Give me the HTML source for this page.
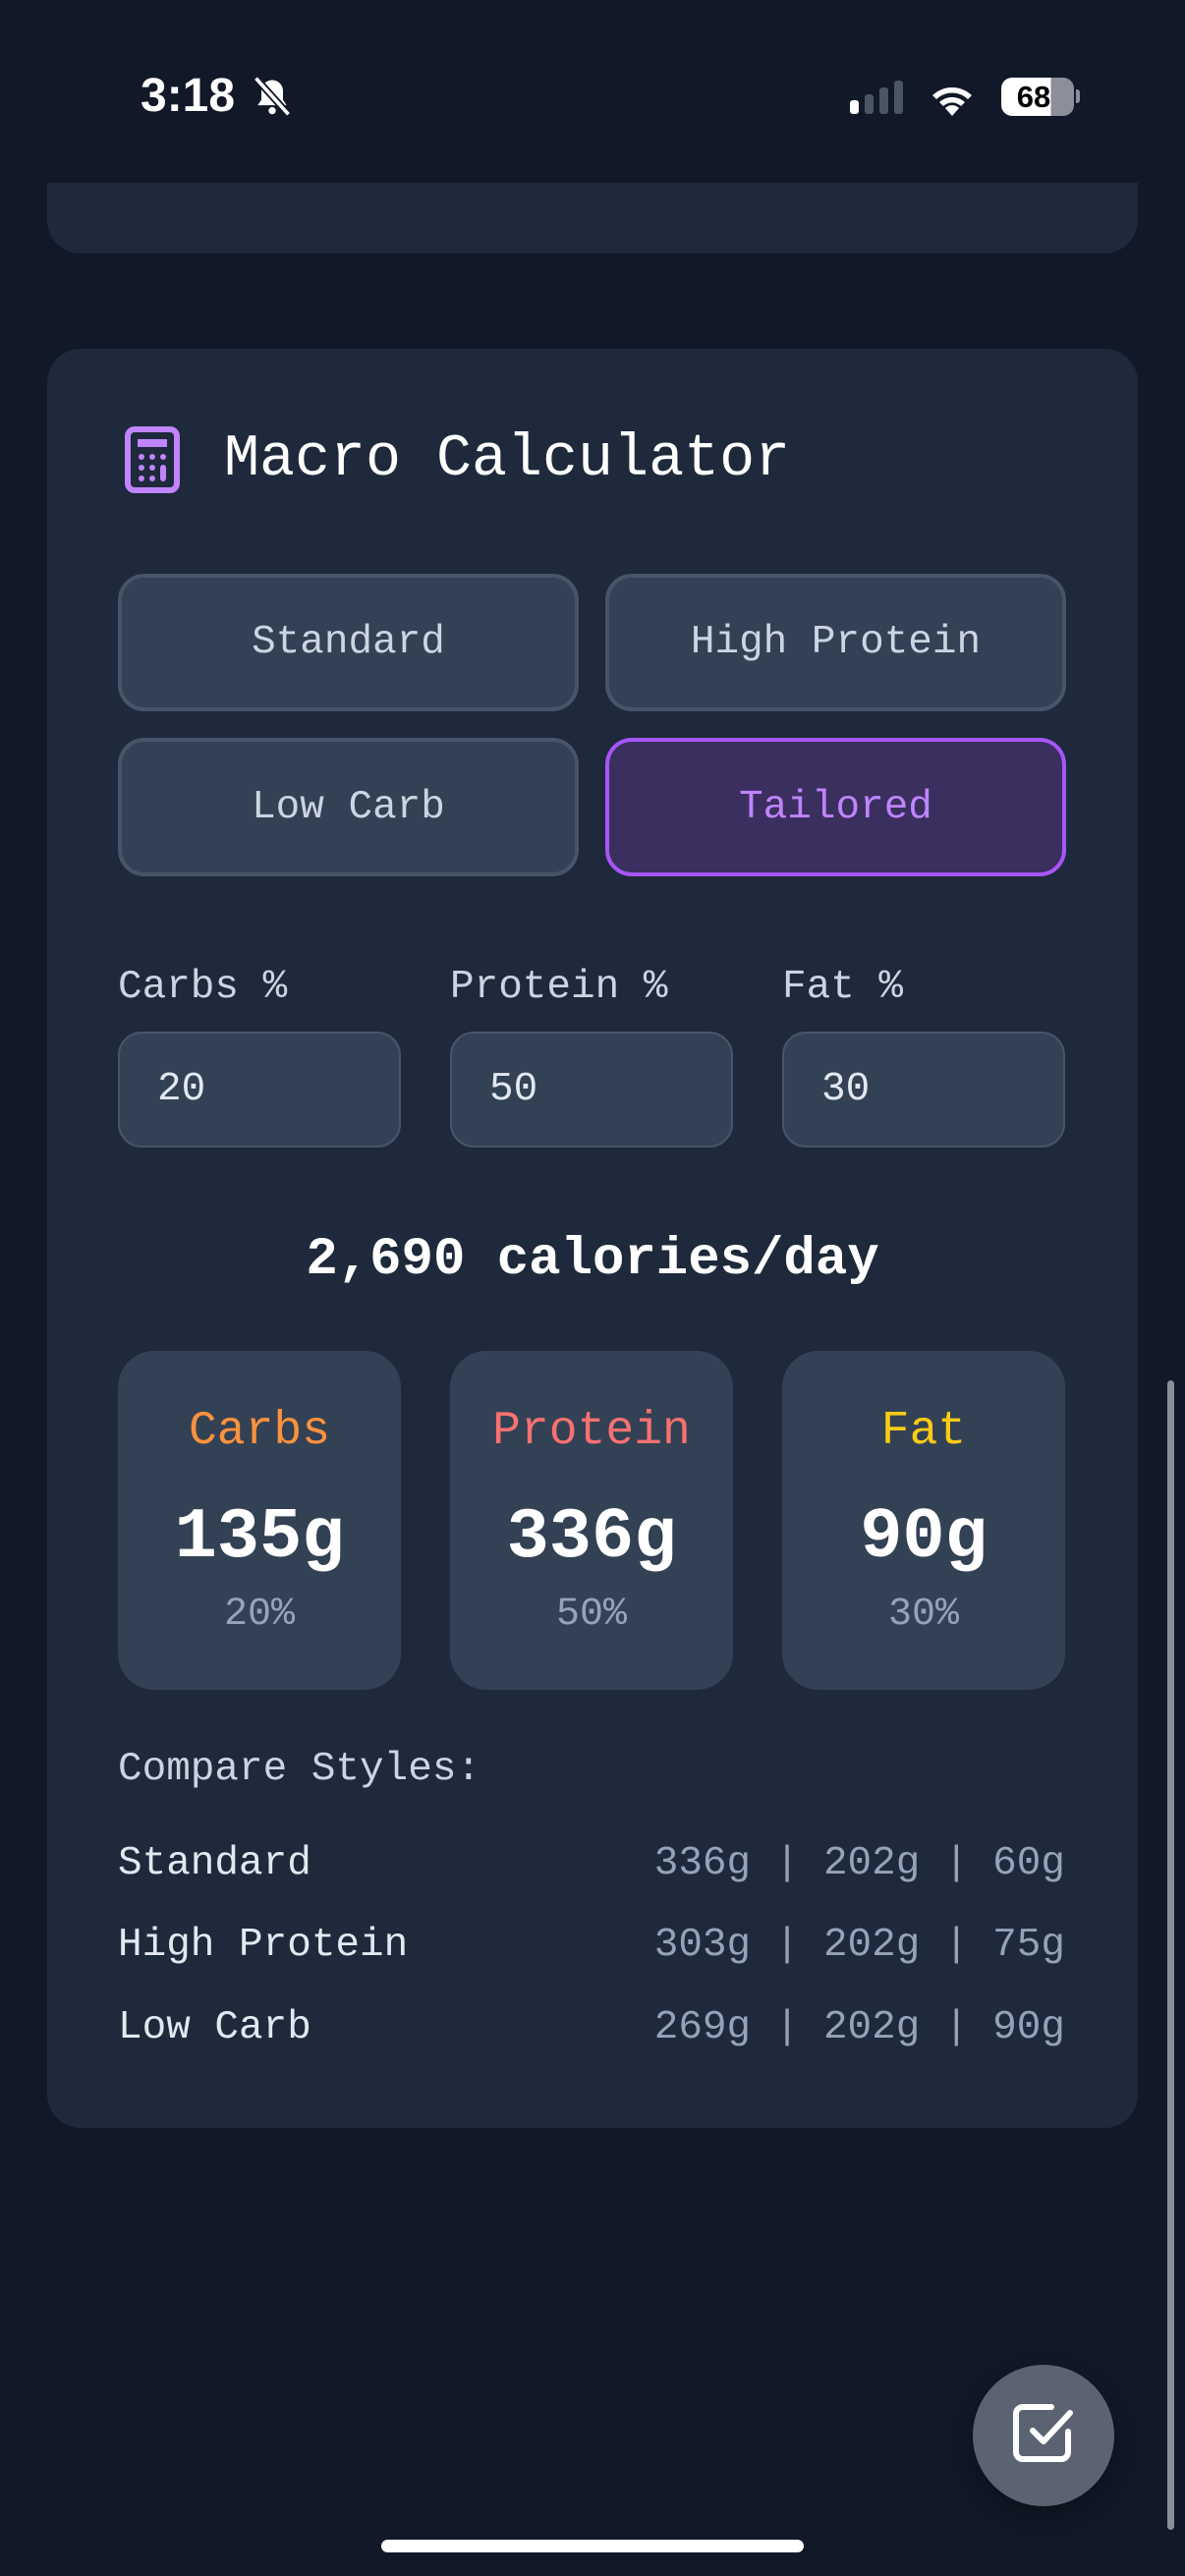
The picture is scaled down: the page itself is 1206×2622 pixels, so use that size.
<!DOCTYPE html>
<html><head><meta charset="utf-8"><style>
*{margin:0;padding:0;box-sizing:border-box}
body{width:1206px;height:2622px;background:#111827;position:relative;overflow:hidden;font-family:"Liberation Mono","DejaVu Sans Mono",monospace;color:#cbd5e1}
.a{position:absolute}
.card{background:#1e293b;border-radius:34px}
.btn{position:absolute;background:#334155;border:4px solid #475569;border-radius:27px;display:flex;align-items:center;justify-content:center;font-size:41px;color:#cbd5e1}
.lbl{position:absolute;font-size:41px;color:#cbd5e1;line-height:1}
.inp{position:absolute;top:1050px;width:288px;height:118px;background:#334155;border:2px solid #475569;border-radius:24px;font-size:41px;color:#e2e8f0;padding-left:38px;display:flex;align-items:center}
.box{position:absolute;top:1375px;width:288px;height:345px;background:#334155;border-radius:37px;text-align:center}
.box .n{position:absolute;left:0;right:0;top:52px;font-size:48px;line-height:60px}
.box .v{position:absolute;left:0;right:0;top:145px;font-size:72px;font-weight:bold;color:#fff;line-height:90px}
.box .p{position:absolute;left:0;right:0;top:244px;font-size:40px;color:#94a3b8;line-height:50px}
.row{position:absolute;left:120px;width:964px;font-size:41px;line-height:50px;display:flex;justify-content:space-between;color:#e2e8f0}
.row span:last-child{color:#94a3b8}
</style></head><body>
<div class="a" style="left:143px;top:70px;font-family:'Liberation Sans',sans-serif;font-size:48px;font-weight:bold;color:#fff;line-height:56px">3:18</div>
<svg class="a" style="left:255px;top:76px" width="44" height="44" viewBox="0 0 24 24"><path d="M12 3a6 6 0 0 0-6 6v5l-2 3h16l-2-3V9a6 6 0 0 0-6-6z" fill="#fff"/><circle cx="12" cy="20" r="2" fill="#fff"/><path d="M3 2l18 20" stroke="#111827" stroke-width="4"/><path d="M3 2l18 20" stroke="#fff" stroke-width="2"/></svg>
<div class="a" style="left:865px;top:102px;width:9px;height:14px;background:#fff;border-radius:3px"></div>
<div class="a" style="left:880px;top:96px;width:9px;height:20px;background:#4b5563;border-radius:3px"></div>
<div class="a" style="left:895px;top:89px;width:9px;height:27px;background:#4b5563;border-radius:3px"></div>
<div class="a" style="left:910px;top:82px;width:9px;height:34px;background:#4b5563;border-radius:3px"></div>
<svg class="a" style="left:944px;top:80px" width="50" height="40" viewBox="0 0 50 40"><path d="M25 38L18 30a10 10 0 0 1 14 0z" fill="#fff"/><path d="M12 24a19 19 0 0 1 26 0l-4 4a13 13 0 0 0-18 0z" fill="#fff"/><path d="M5 17a29 29 0 0 1 40 0l-4 4a23 23 0 0 0-32 0z" fill="#fff"/></svg>
<div class="a" style="left:1019px;top:79px;width:74px;height:39px;border-radius:11px;background:linear-gradient(90deg,#fff 0 68%,#8b8f99 68%);color:#000;font-family:'Liberation Sans',sans-serif;font-weight:bold;font-size:31px;line-height:39px;text-align:center;padding-right:8px">68</div>
<div class="a" style="left:1095px;top:91px;width:4px;height:14px;background:#8b8f99;border-radius:0 3px 3px 0"></div>

<div class="a card" style="left:48px;top:186px;width:1110px;height:72px;border-radius:0 0 34px 34px"></div>
<div class="a card" style="left:48px;top:355px;width:1110px;height:1811px"></div>

<svg class="a" style="left:127px;top:434px" width="56" height="68" viewBox="0 0 56 68"><rect x="3" y="3" width="50" height="62" rx="7" fill="none" stroke="#c084fc" stroke-width="6"/><rect x="13" y="13" width="30" height="8" fill="#c084fc"/><g fill="#c084fc"><circle cx="17" cy="31" r="3"/><circle cx="28" cy="31" r="3"/><circle cx="39" cy="31" r="3"/><circle cx="17" cy="42" r="3"/><circle cx="28" cy="42" r="3"/><circle cx="17" cy="53" r="3"/><circle cx="28" cy="53" r="3"/><rect x="36" y="39" width="6" height="17" rx="3"/></g></svg>
<div class="a" style="left:228px;top:433px;font-size:60px;color:#fff;line-height:70px">Macro Calculator</div>

<div class="btn" style="left:120px;top:584px;width:469px;height:140px">Standard</div>
<div class="btn" style="left:616px;top:584px;width:469px;height:140px">High Protein</div>
<div class="btn" style="left:120px;top:751px;width:469px;height:141px">Low Carb</div>
<div class="btn" style="left:616px;top:751px;width:469px;height:141px;background:#3b2f5f;border-color:#a855f7;color:#c084fc">Tailored</div>

<div class="lbl" style="left:120px;top:985px">Carbs %</div>
<div class="lbl" style="left:458px;top:985px">Protein %</div>
<div class="lbl" style="left:796px;top:985px">Fat %</div>
<div class="inp" style="left:120px">20</div>
<div class="inp" style="left:458px">50</div>
<div class="inp" style="left:796px">30</div>

<div class="a" style="left:0;width:1206px;top:1250px;text-align:center;font-size:54px;font-weight:bold;color:#fff;line-height:66px">2,690 calories/day</div>

<div class="box" style="left:120px"><div class="n" style="color:#fb923c">Carbs</div><div class="v">135g</div><div class="p">20%</div></div>
<div class="box" style="left:458px"><div class="n" style="color:#f87171">Protein</div><div class="v">336g</div><div class="p">50%</div></div>
<div class="box" style="left:796px"><div class="n" style="color:#facc15">Fat</div><div class="v">90g</div><div class="p">30%</div></div>

<div class="a" style="left:120px;top:1776px;font-size:41px;line-height:50px;color:#cbd5e1">Compare Styles:</div>
<div class="row" style="top:1872px"><span>Standard</span><span>336g | 202g | 60g</span></div>
<div class="row" style="top:1955px"><span>High Protein</span><span>303g | 202g | 75g</span></div>
<div class="row" style="top:2039px"><span>Low Carb</span><span>269g | 202g | 90g</span></div>

<div class="a" style="left:1188px;top:1405px;width:7px;height:1170px;background:#8b8f99;border-radius:4px"></div>
<div class="a" style="left:990px;top:2407px;width:144px;height:144px;border-radius:50%;background:#5b6373;box-shadow:0 8px 24px rgba(0,0,0,.35)"></div>
<svg class="a" style="left:1028px;top:2445px" width="68" height="68" viewBox="0 0 68 68"><path d="M42 5H13a7 7 0 0 0-7 7v39a7 7 0 0 0 7 7h39a7 7 0 0 0 7-7V30" fill="none" stroke="#fff" stroke-width="6" stroke-linecap="round"/><path d="M23 29l11 11 27-29" fill="none" stroke="#fff" stroke-width="6" stroke-linecap="round" stroke-linejoin="round"/></svg>
<div class="a" style="left:388px;top:2585px;width:430px;height:13px;background:#fff;border-radius:7px"></div>
</body></html>
